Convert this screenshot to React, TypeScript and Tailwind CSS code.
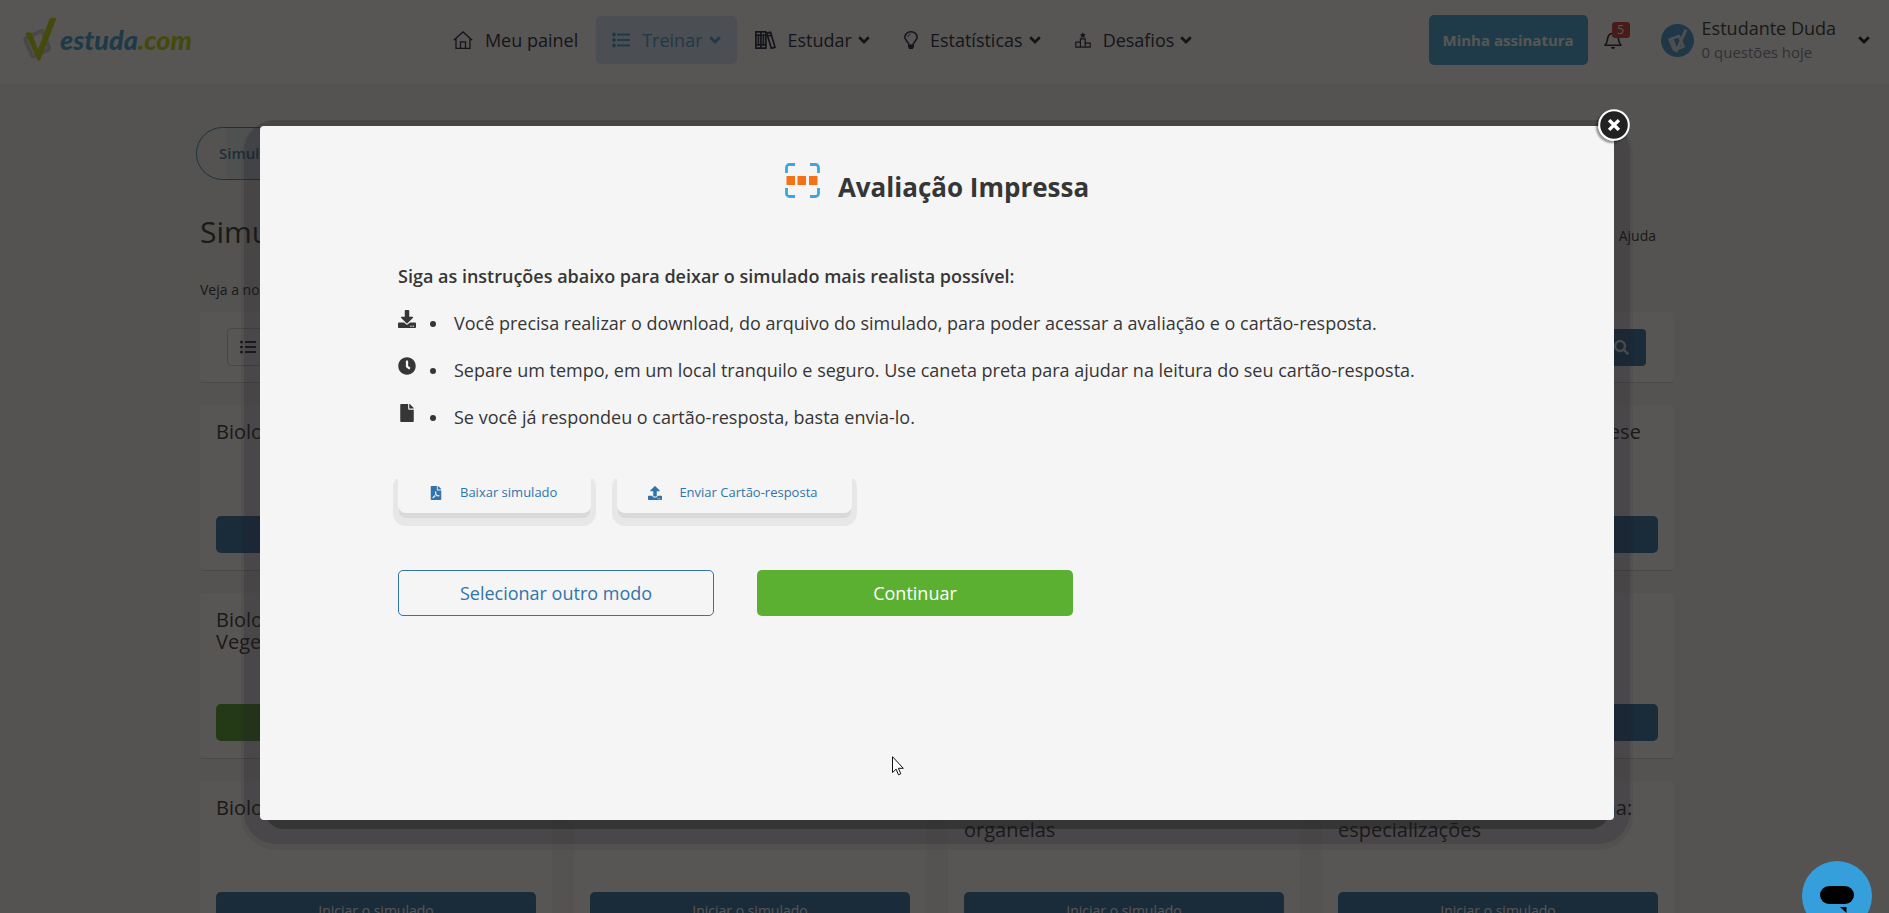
import type { ReactNode } from "react";
import { FaClock, FaDownload, FaFile, FaFilePdf, FaListUl, FaSearch, FaUpload } from "react-icons/fa";

function Logo() {
  return (
    <a href="#inicio" className="flex items-center gap-1 font-[Lato,'Open_Sans',sans-serif]" aria-label="estuda.com">
      <svg viewBox="0 0 34 46" className="h-[46px] w-[34px]" fill="none">
        <path
          d="M5 20.500 19 14.200c1-.4 1.800 0 2 1l6 15.500c.3 1-.2 2-1.200 2.300L12 39.200c-1 .3-2-.2-2.300-1.200L3.500 23.500c-.5-1.400.2-2.500 1.500-3z"
          stroke="#cfcfd2"
          strokeWidth="4"
        />
        <path
          d="M4.600 15.600h3.600c.8 0 1.300.3 1.600 1l6.200 15.800L27.500 2.300c.4-1 1.100-1.500 2.200-1.500h3c1.200 0 1.700.8 1.200 1.900L18.300 42.800c-.6 1.400-2.300 1.400-2.900 0L3.800 17.500c-.5-1.100-.1-1.900.8-1.900z"
          fill="#bfd60a"
        />
      </svg>
      <span className="text-[27px] leading-8 font-black italic text-[#429fd8]">
        estuda<span className="text-[#bfd60a]">.com</span>
      </span>
    </a>
  );
}

function Chevron({ className }: { className: string }) {
  return (
    <svg viewBox="0 0 12 8" className={className} fill="none" stroke="currentColor" strokeWidth="2.800">
      <path d="M1.200 1.200 6 6l4.800-4.800" />
    </svg>
  );
}

function HomeIcon() {
  return (
    <svg viewBox="0 0 20 18" className="h-[18px] w-5" fill="none" stroke="currentColor" strokeWidth="1.300">
      <path d="M.7 9.200 10 .9l9.300 8.300M3 7.200v10.200h14V7.200M7.500 17.400v-6.600h5v6.600" />
    </svg>
  );
}

function ListIcon() {
  return (
    <svg viewBox="0 0 18 16" className="h-4 w-[18px]" fill="currentColor">
      <circle cx="2" cy="2.500" r="1.900" />
      <circle cx="2" cy="8" r="1.900" />
      <circle cx="2" cy="13.500" r="1.900" />
      <path d="M5 1.500h13v2H5zM5 7h13v2H5zM5 12.500h13v2H5z" />
    </svg>
  );
}

function BooksIcon() {
  return (
    <svg viewBox="0 0 21 18" className="h-[18px] w-[21px]" fill="none" stroke="currentColor" strokeWidth="1.700">
      <path d="M.9.9h5v16.200h-5zM5.900.9h5v16.200h-5zM.9 4h10M.9 13.800h10M3.400 4v9.800M8.400 4v9.800" />
      <path d="m11.800 2.200 3.800-.9 4.400 15-3.700 1zM12.600 5l3.800-.9" />
    </svg>
  );
}

function BulbIcon() {
  return (
    <svg viewBox="0 0 14 18" className="h-[18px] w-[14px]" fill="none" stroke="currentColor" strokeWidth="1.600">
      <path d="M5 14.200c0-3.200-4.200-4.400-4.200-8.200a6.200 5.200 0 0 1 12.400 0c0 3.800-4.200 5-4.200 8.200z" />
      <path d="M4 6c0-1.600 1-2.600 2.600-2.900" strokeWidth="1" />
      <path d="M4 14h6v1.800L8.900 18H5.100L4 15.800z" fill="currentColor" stroke="none" />
    </svg>
  );
}

function PodiumIcon() {
  return (
    <svg viewBox="0 0 16 16" className="h-4 w-4" fill="none" stroke="currentColor" strokeWidth="1.200">
      <path d="M.8 10.200h4.600v5H.8zM5.400 6.800h4.800v8.400H5.400zM10.200 11.200h5v4h-5z" />
      <path
        d="m7.800.8.8 1.500 1.600.3-1.100 1.200.2 1.700-1.500-.7-1.500.7.200-1.700-1.100-1.200 1.600-.3z"
        fill="currentColor"
        strokeWidth=".5"
      />
    </svg>
  );
}

function BellIcon() {
  return (
    <svg viewBox="0 0 18 19" className="h-[19px] w-[18px]" fill="none" stroke="currentColor" strokeWidth="1.600">
      <path
        d="M1 14.200h16c-1.500-1.300-2-2.600-2.300-4.700C14.400 7 14.300 2.200 9 2.200S3.600 7 3.300 9.500C3 11.600 2.500 12.900 1 14.200z"
        strokeLinejoin="round"
      />
      <path d="M6.800 16h4.400c-.3 1.200-1.100 1.900-2.200 1.900S7.100 17.200 6.800 16z" fill="currentColor" stroke="none" />
    </svg>
  );
}

function AvatarIcon() {
  return (
    <svg viewBox="0 0 33 33" className="size-[33px]" fill="none">
      <circle cx="16.500" cy="16.500" r="16.500" fill="#4497d3" />
      <path d="m8.500 15.500 9.500-3.500 4.500 10.500-9.500 3.500z" stroke="#dfe6ee" strokeWidth="2.500" strokeLinejoin="round" />
      <path d="m11.500 16 4 11L25 5.500" stroke="#dfe6ee" strokeWidth="3" strokeLinejoin="round" />
    </svg>
  );
}

function SheetScanIcon() {
  return (
    <svg viewBox="0 0 35 35" className="size-[35px]" fill="none">
      <path
        d="M1.500 10V4.500a3 3 0 0 1 3-3H10M25 1.500h5.500a3 3 0 0 1 3 3V10M33.500 25v5.500a3 3 0 0 1-3 3H25M10 33.500H4.500a3 3 0 0 1-3-3V25"
        stroke="#40a4de"
        strokeWidth="2.800"
      />
      <path d="M1.500 13H10v9H1.500zM12.500 13H21v9h-8.500zM24 13h8.500v9H24z" fill="#f47216" />
    </svg>
  );
}

const navItems: { label: string; icon: ReactNode; menu: boolean; active?: boolean }[] = [
  { label: "Meu painel", icon: <HomeIcon />, menu: false },
  { label: "Treinar", icon: <ListIcon />, menu: true, active: true },
  { label: "Estudar", icon: <BooksIcon />, menu: true },
  { label: "Estatísticas", icon: <BulbIcon />, menu: true },
  { label: "Desafios", icon: <PodiumIcon />, menu: true },
];

function Header() {
  return (
    <header className="flex h-[84px] items-center bg-white pr-[19px] pb-1 pl-[22px]">
      <Logo />
      <nav className="ml-[245px] flex gap-[2px]">
        {navItems.map((item) => (
          <a
            key={item.label}
            href="#menu"
            className={
              item.active
                ? "flex h-12 items-center rounded-[5px] bg-[#d5e3fa] px-4 text-[18px] text-[#4a9ed2]"
                : "flex h-12 items-center rounded-[5px] px-4 text-[18px] text-[#1f2540]"
            }
          >
            {item.icon}
            <span className="ml-3">{item.label}</span>
            {item.menu && <Chevron className="ml-[6px] h-2 w-3" />}
          </a>
        ))}
      </nav>
      <div className="ml-auto flex items-center">
        <button className="h-[50px] w-[159px] rounded-[5px] bg-[#45a4da] text-[15px] font-bold text-white">
          Minha assinatura
        </button>
        <button className="relative ml-4 text-[#222]" aria-label="Notificações">
          <BellIcon />
          <span className="absolute -top-[9px] left-2 h-4 w-[18px] rounded-[3px] bg-[#c83f42] text-center text-[12px] leading-4 text-white">
            5
          </span>
        </button>
        <button className="ml-[39px] flex items-center text-left">
          <AvatarIcon />
          <span className="ml-2 flex flex-col">
            <span className="text-[18px] leading-6 text-[#333]">Estudante Duda</span>
            <span className="text-[15px] leading-6 text-[#7d8498]">0 questões hoje</span>
          </span>
          <Chevron className="ml-[22px] h-2 w-3 text-[#111]" />
        </button>
      </div>
    </header>
  );
}

const cards = [
  { title: "Biologia: Citologia", done: false },
  { title: "Biologia: Ecologia", done: false },
  { title: "Biologia: Genética", done: false },
  { title: "Biologia – Citologia: Fotossíntese", done: false },
  { title: "Biologia: Anatomia e Fisiologia Vegetal", done: true },
  { title: "Biologia: Zoologia", done: false },
  { title: "Biologia: Botânica", done: false },
  { title: "Biologia: Evolução", done: false },
  { title: "Biologia: Biotecnologia", done: false },
  { title: "Biologia: Virologia", done: false },
  { title: "Biologia – Citologia, tipos e organelas", done: false },
  { title: "Biologia – Citologia, membrana: especializações", done: false },
];

function Catalog() {
  return (
    <main className="mx-auto w-full max-w-[1474px] pt-[43px]">
      <div className="-ml-1 flex">
        <a
          href="#simulados"
          className="flex h-[53px] items-center rounded-full border border-[#3b86c0] bg-[linear-gradient(90deg,transparent_30px,#e2eff2_30px)] px-[22px] text-[15px] font-semibold text-[#3f76a8]"
        >
          Simulados
        </a>
      </div>
      <div className="mt-8 flex items-center justify-between">
        <h1 className="text-[30px] leading-10">Simulados</h1>
        <a href="#ajuda" className="mt-2 mr-[18px] text-[14px] leading-5">
          Ajuda
        </a>
      </div>
      <p className="mt-7 text-[14px] leading-5">Veja a nossa lista de simulados</p>
      <div className="mt-3 flex h-[71px] items-center justify-between rounded border-b border-[#d0d0d0] bg-white pr-7 pl-[27px]">
        <button aria-label="Lista" className="h-[38px] w-[42px] rounded-[4px] border border-[#ccc] px-3">
          <FaListUl className="size-4" />
        </button>
        <button aria-label="Buscar" className="h-[37px] rounded-[4px] bg-[#346fa5] px-[17px] text-white">
          <FaSearch className="size-[15px]" />
        </button>
      </div>
      <div className="mt-[22px] grid grid-cols-4 gap-[22px]">
        {cards.map((card) => (
          <article
            key={card.title}
            className="flex h-[166px] flex-col justify-between rounded border-b border-[#d0d0d0] bg-white px-4 pt-4 pb-[17px]"
          >
            <h2 className="text-[20px] leading-[22px]">{card.title}</h2>
            <button
              className={
                card.done
                  ? "h-[37px] rounded-[5px] bg-[#55a230] text-[14px] text-white"
                  : "h-[37px] rounded-[5px] bg-[#346fa5] text-[14px] text-white"
              }
            >
              {card.done ? "Ver resultado" : "Iniciar o simulado"}
            </button>
          </article>
        ))}
      </div>
    </main>
  );
}

const steps = [
  {
    Icon: FaDownload,
    text: "Você precisa realizar o download, do arquivo do simulado, para poder acessar a avaliação e o cartão-resposta.",
  },
  {
    Icon: FaClock,
    text: "Separe um tempo, em um local tranquilo e seguro. Use caneta preta para ajudar na leitura do seu cartão-resposta.",
  },
  { Icon: FaFile, text: "Se você já respondeu o cartão-resposta, basta envia-lo." },
];

const files = [
  { Icon: FaFilePdf, label: "Baixar simulado" },
  { Icon: FaUpload, label: "Enviar Cartão-resposta" },
];

function PrintedTestDialog() {
  return (
    <div className="relative w-full max-w-[1354px]">
      <div className="absolute -inset-x-4 -top-[6px] -bottom-6 rounded-[32px] bg-[rgba(32,26,39,0.25)] shadow-[0_3px_0_3px_rgba(32,26,30,0.07)]" />
      <div className="absolute inset-x-1 -bottom-[9px] h-12 rounded-[20px] bg-[rgba(20,20,20,0.35)]" />
      <section
        role="dialog"
        aria-labelledby="dialog-title"
        className="relative min-h-[76vh] rounded-[4px] bg-[#f5f5f5] px-[138px] pt-[37px] text-[#363636]"
      >
        <button
          aria-label="Fechar"
          className="absolute -top-[17px] -right-4 size-8 rounded-full shadow-[-2px_2px_2px_rgba(0,0,0,0.4)]"
        >
          <svg viewBox="0 0 32 32" className="size-8">
            <circle cx="16" cy="16" r="14.800" fill="#222" stroke="#fff" strokeWidth="2" />
            <path d="m12.300 12.300 7.400 7.400m0-7.400-7.400 7.400" stroke="#fff" strokeWidth="3.400" strokeLinecap="square" />
          </svg>
        </button>
        <div className="flex items-start justify-center gap-[18px]">
          <SheetScanIcon />
          <h2 id="dialog-title" className="mt-[6px] text-[26px] leading-9 font-bold">
            Avaliação Impressa
          </h2>
        </div>
        <p className="mt-[58px] text-[18px] leading-[26px] font-semibold">
          Siga as instruções abaixo para deixar o simulado mais realista possível:
        </p>
        <ul className="mt-[21px] flex flex-col gap-[21px]">
          {steps.map(({ Icon, text }) => (
            <li key={text} className="flex items-start text-[18px] leading-[26px]">
              <Icon className="size-[18px] shrink-0" />
              <span className="mt-[11px] mr-[18px] ml-[14px] size-[6px] shrink-0 rounded-full bg-[#363636]" />
              {text}
            </li>
          ))}
        </ul>
        <div className="mt-[41px] flex gap-[26px]">
          {files.map(({ Icon, label }) => (
            <button
              key={label}
              className="flex h-[42px] items-center gap-[17px] rounded-[8px] bg-[#f5f5f5] pt-[2px] pr-[34px] pl-[31px] text-[13px] text-[#3174ab] shadow-[0_6px_0_-1px_#d9d9d9,0_8px_0_5px_#e7e7e7] [clip-path:inset(8px_-6px_-14px_-6px)]"
            >
              <Icon className="size-[14px]" />
              {label}
            </button>
          ))}
        </div>
        <div className="mt-[57px] flex gap-[43px]">
          <button className="h-[46px] w-[316px] rounded-[5px] border border-[#3174ab] text-[18px] text-[#3174ab]">
            Selecionar outro modo
          </button>
          <button className="h-[46px] w-[316px] rounded-[5px] bg-[#5bb031] text-[18px] text-white">Continuar</button>
        </div>
      </section>
    </div>
  );
}

export default function App() {
  return (
    <div className="relative h-screen overflow-hidden bg-[#f5f5f5] font-['Open_Sans',sans-serif] text-[#333]">
      <Header />
      <div className="pr-[15px]">
        <Catalog />
      </div>
      <div className="absolute inset-0 flex items-start justify-center bg-[rgba(16,14,11,0.7)] pt-[126px] pr-[15px]">
        <PrintedTestDialog />
      </div>
      <button
        aria-label="Conversar"
        className="absolute right-[17px] -bottom-[18px] size-[70px] rounded-full bg-[#359fdc]"
      >
        <svg viewBox="0 0 70 70" className="size-[70px]">
          <rect x="18" y="25" width="34" height="18" rx="9" />
          <path d="M38 46h6.500v6z" />
        </svg>
      </button>
      <svg viewBox="0 0 12 20" className="absolute top-[756px] left-[892px] h-5 w-3">
        <path
          d="M.5.700v15.800l3.600-3.400 2.400 5.700 2.300-1-2.400-5.500h4.900z"
          fill="#fff"
          stroke="#111"
          strokeWidth="1"
        />
      </svg>
    </div>
  );
}
